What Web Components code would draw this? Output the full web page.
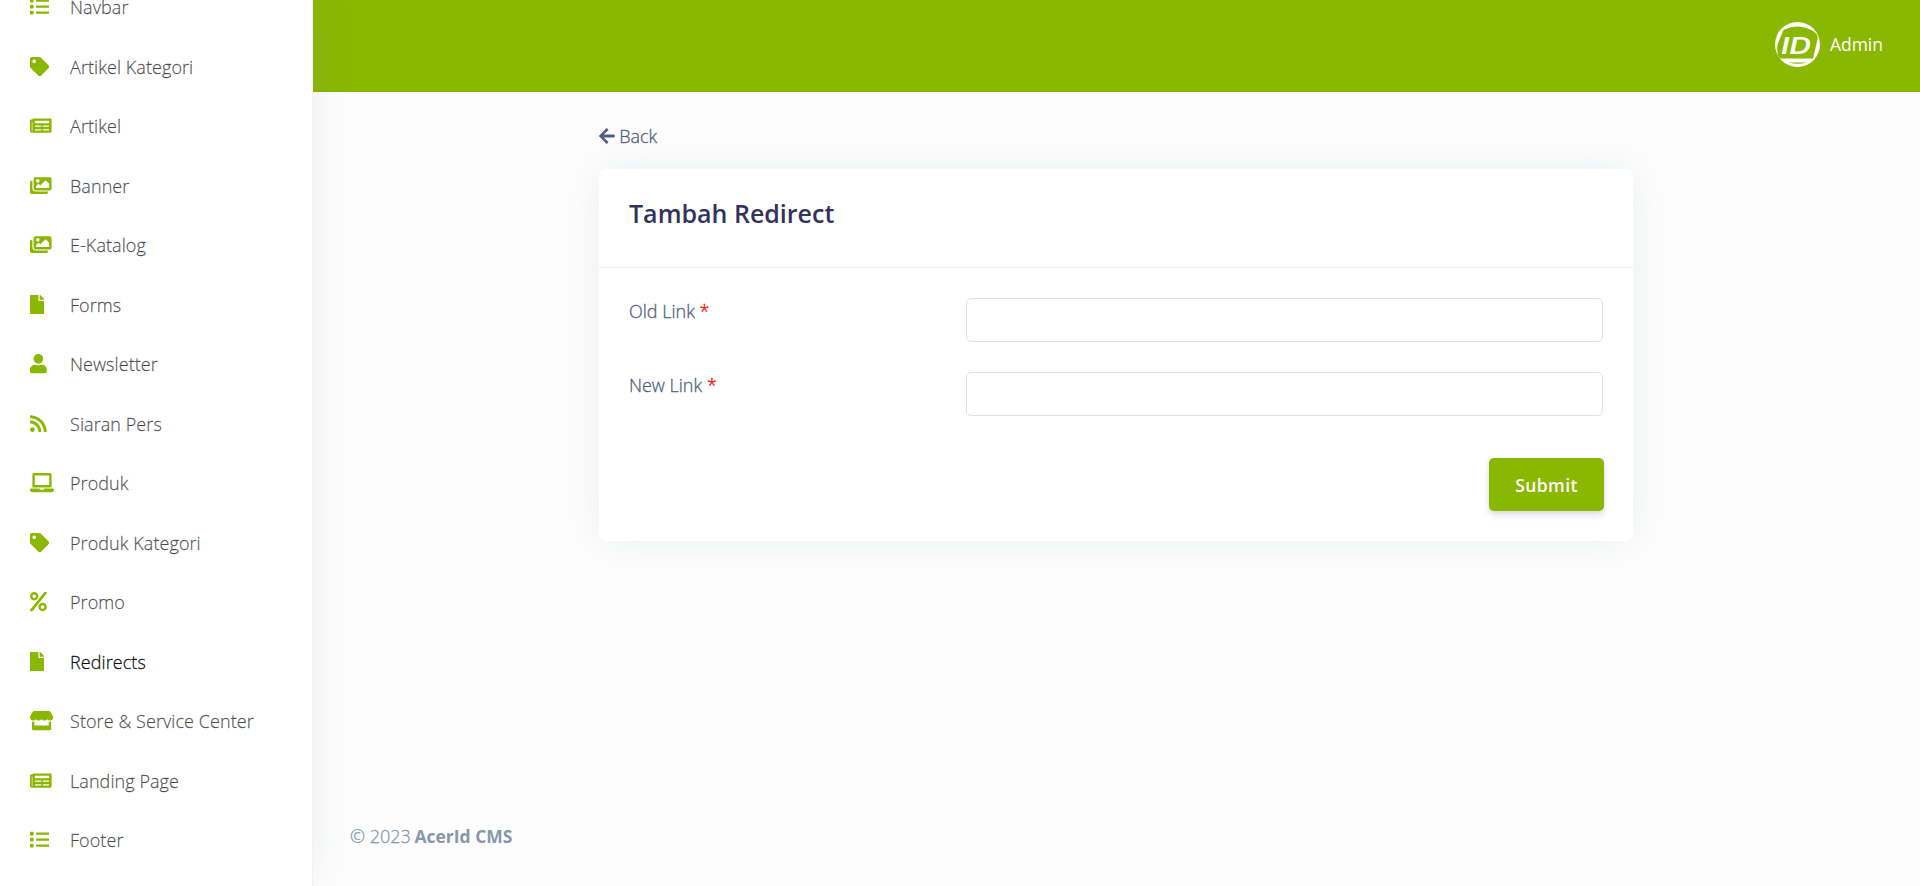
<!DOCTYPE html>
<html lang="id">
<head>
<meta charset="utf-8">
<title>Tambah Redirect</title>
<style>
html,body{margin:0;height:100%;overflow:hidden}
body{background:#fdfdfd;font-family:"Open Sans",sans-serif;font-size:18px;font-weight:300;color:#525f7f;-webkit-text-stroke:.3px currentColor}
</style>
</head>
<body>
<cms-app></cms-app>
<script>
const ICONS = {
list:[512,"M80 368H16a16 16 0 0 0-16 16v64a16 16 0 0 0 16 16h64a16 16 0 0 0 16-16v-64a16 16 0 0 0-16-16zm0-320H16A16 16 0 0 0 0 64v64a16 16 0 0 0 16 16h64a16 16 0 0 0 16-16V64a16 16 0 0 0-16-16zm0 160H16a16 16 0 0 0-16 16v64a16 16 0 0 0 16 16h64a16 16 0 0 0 16-16v-64a16 16 0 0 0-16-16zm416 176H176a16 16 0 0 0-16 16v32a16 16 0 0 0 16 16h320a16 16 0 0 0 16-16v-32a16 16 0 0 0-16-16zm0-320H176a16 16 0 0 0-16 16v32a16 16 0 0 0 16 16h320a16 16 0 0 0 16-16V80a16 16 0 0 0-16-16zm0 160H176a16 16 0 0 0-16 16v32a16 16 0 0 0 16 16h320a16 16 0 0 0 16-16v-32a16 16 0 0 0-16-16z"],
tag:[512,"M0 252.118V48C0 21.49 21.49 0 48 0h204.118a48 48 0 0 1 33.941 14.059l211.882 211.882c18.745 18.745 18.745 49.137 0 67.882L293.823 497.941c-18.745 18.745-49.137 18.745-67.882 0L14.059 286.059A48 48 0 0 1 0 252.118zM112 64c-26.51 0-48 21.49-48 48s21.49 48 48 48 48-21.49 48-48-21.49-48-48-48z"],
news:[576,"M552 64H88c-13.255 0-24 10.745-24 24v8H24c-13.255 0-24 10.745-24 24v272c0 30.928 25.072 56 56 56h472c26.51 0 48-21.49 48-48V88c0-13.255-10.745-24-24-24zM56 400a8 8 0 0 1-8-8V144h16v248a8 8 0 0 1-8 8zm236-16H140c-6.627 0-12-5.373-12-12v-8c0-6.627 5.373-12 12-12h152c6.627 0 12 5.373 12 12v8c0 6.627-5.373 12-12 12zm208 0H348c-6.627 0-12-5.373-12-12v-8c0-6.627 5.373-12 12-12h152c6.627 0 12 5.373 12 12v8c0 6.627-5.373 12-12 12zm-208-96H140c-6.627 0-12-5.373-12-12v-8c0-6.627 5.373-12 12-12h152c6.627 0 12 5.373 12 12v8c0 6.627-5.373 12-12 12zm208 0H348c-6.627 0-12-5.373-12-12v-8c0-6.627 5.373-12 12-12h152c6.627 0 12 5.373 12 12v8c0 6.627-5.373 12-12 12zm0-96H140c-6.627 0-12-5.373-12-12v-40c0-6.627 5.373-12 12-12h360c6.627 0 12 5.373 12 12v40c0 6.627-5.373 12-12 12z"],
images:[576,"M480 416v16c0 26.51-21.49 48-48 48H48c-26.51 0-48-21.49-48-48V176c0-26.51 21.49-48 48-48h16v208c0 44.112 35.888 80 80 80h336zm96-80V80c0-26.51-21.49-48-48-48H144c-26.51 0-48 21.49-48 48v256c0 26.51 21.49 48 48 48h384c26.51 0 48-21.49 48-48zM256 128c0 26.51-21.49 48-48 48s-48-21.49-48-48 21.49-48 48-48 48 21.49 48 48zm-96 144l55.515-55.515c4.686-4.686 12.284-4.686 16.971 0L272 256l135.515-135.515c4.686-4.686 12.284-4.686 16.971 0L512 208v112H160v-48z"],
file:[384,"M224 136V0H24C10.7 0 0 10.7 0 24v464c0 13.3 10.7 24 24 24h336c13.3 0 24-10.7 24-24V160H248c-13.2 0-24-10.8-24-24zm160-14.1v6.1H256V0h6.1c6.4 0 12.5 2.5 17 7l97.9 98c4.5 4.5 7 10.6 7 16.9z"],
user:[448,"M224 256c70.7 0 128-57.3 128-128S294.7 0 224 0 96 57.3 96 128s57.3 128 128 128zm89.6 32h-16.7c-22.2 10.2-46.9 16-72.9 16s-50.6-5.8-72.9-16h-16.7C60.2 288 0 348.2 0 422.4V464c0 26.5 21.5 48 48 48h352c26.5 0 48-21.5 48-48v-41.6c0-74.2-60.2-134.4-134.4-134.4z"],
rss:[448,"M128.081 415.959c0 35.369-28.672 64.041-64.041 64.041S0 451.328 0 415.959s28.672-64.041 64.041-64.041 64.04 28.673 64.04 64.041zm175.66 47.25c-8.354-154.6-132.185-278.587-286.95-286.95C7.656 175.765 0 183.105 0 192.253v48.069c0 8.415 6.49 15.472 14.887 16.018 111.832 7.284 201.473 96.702 208.772 208.772.547 8.397 7.604 14.887 16.018 14.887h48.069c9.149.001 16.489-7.655 15.995-16.79zm144.249.288C439.596 229.677 251.465 40.445 16.503 32.01 7.473 31.686 0 38.981 0 48.016v48.068c0 8.625 6.835 15.645 15.453 15.999 191.179 7.839 344.627 161.316 352.465 352.465.353 8.618 7.373 15.453 15.998 15.453h48.068c9.034-.001 16.329-7.474 16.005-16.504z"],
laptop:[640,"M624 416H381.54c-.74 19.81-14.71 32-32.74 32H288c-18.69 0-33.02-17.47-32.77-32H16c-8.8 0-16 7.2-16 16v16c0 35.2 28.8 64 64 64h512c35.2 0 64-28.8 64-64v-16c0-8.8-7.2-16-16-16zM576 48c0-26.400-21.600-48-48-48H112C85.600 0 64 21.600 64 48v336h512V48zm-64 272H128V64h384v256z"],
percent:[448,"M112 224c61.900 0 112-50.100 112-112S173.900 0 112 0 0 50.100 0 112s50.100 112 112 112zm0-160c26.500 0 48 21.500 48 48s-21.500 48-48 48-48-21.500-48-48 21.500-48 48-48zm224 224c-61.900 0-112 50.100-112 112s50.100 112 112 112 112-50.100 112-112-50.100-112-112-112zm0 160c-26.500 0-48-21.500-48-48s21.500-48 48-48 48 21.500 48 48-21.500 48-48 48zM392.300.2l31.600-.1c19.400-.1 30.900 21.800 19.700 37.800L77.400 501.600a23.950 23.950 0 0 1-19.600 10.200l-33.400.1c-19.500 0-30.900-21.900-19.700-37.800l368-463.700C377.200 4 384.500.2 392.300.2z"],
store:[616,"M602 118.600L537.100 15C531.300 5.700 521 0 510 0H106C95 0 84.700 5.700 78.900 15L14 118.600c-33.500 53.500-3.800 127.900 58.800 136.400 4.500.6 9.100.9 13.700.9 29.600 0 55.800-13 73.800-33.100 18 20.100 44.300 33.100 73.800 33.100 29.600 0 55.800-13 73.800-33.100 18 20.100 44.300 33.100 73.800 33.100 29.600 0 55.800-13 73.800-33.100 18.100 20.100 44.300 33.100 73.800 33.100 4.700 0 9.200-.3 13.700-.9 62.800-8.400 92.600-82.800 59-136.400zM529.500 288c-10 0-19.900-1.500-29.500-3.800V384H116v-99.800c-9.600 2.200-19.500 3.800-29.500 3.800-6 0-12.100-.4-18-1.200-5.600-.8-11.100-2.100-16.400-3.600V480c0 17.700 14.300 32 32 32h448c17.700 0 32-14.300 32-32V283.200c-5.400 1.600-10.800 2.900-16.400 3.600-6.100.8-12.100 1.200-18.200 1.200z"],
back:[448,"M257.500 445.100l-22.200 22.200c-9.400 9.400-24.600 9.400-33.900 0L7 273c-9.400-9.400-9.400-24.600 0-33.900L201.400 44.700c9.400-9.400 24.600-9.400 33.900 0l22.200 22.200c9.500 9.500 9.300 25-.4 34.300L136.600 216H424c13.300 0 24 10.700 24 24v32c0 13.300-10.700 24-24 24H136.600l120.500 114.800c9.800 9.300 10 24.800.4 34.300z"]
};
const define = (name, html) => customElements.define(name, class extends HTMLElement {
  constructor(){
    super();
    this.attachShadow({mode:"open"}).innerHTML = typeof html === "function" ? "" : html;
  }
  connectedCallback(){ if (typeof html === "function") this.shadowRoot.innerHTML = html(this); }
});

define("cms-icon", el => {
  const [w, d] = ICONS[el.getAttribute("name")];
  return `<style>:host{display:block;flex:none;height:var(--icon-size,19.2px)}svg{display:block;height:100%;fill:currentColor}</style>
  <svg viewBox="0 0 ${w} 512" style="aspect-ratio:${w}/512"><path d="${d}"/></svg>`;
});

define("nav-item", el => `<style>
:host{display:flex;align-items:center;height:59.5px;padding-left:30px;color:rgba(0,0,0,.6);letter-spacing:.07px}
:host([active]){color:rgba(0,0,0,.9)}
.i{width:40px;color:#8ab700}
a{white-space:nowrap}
</style><div class="i"><cms-icon name="${el.getAttribute("icon")}"></cms-icon></div><a><slot></slot></a>`);

define("side-nav", `<style>
:host{display:block;position:relative;z-index:2;flex:none;box-sizing:border-box;width:313px;height:886px;background:#fff;border-right:1px solid #f1f2f4;box-shadow:0 0 40px rgba(136,152,170,.15)}
nav{margin-top:-22.7px}
</style><nav><slot></slot></nav>`);

define("user-badge", `<style>
:host{display:flex;align-items:center;gap:10px;color:#fff;font-size:17.5px;font-weight:400;-webkit-text-stroke:0}
svg{display:block;width:45px;height:45px}
</style>
<svg viewBox="0 0 45 45"><defs><clipPath id="c"><circle cx="22.5" cy="22.5" r="22.5"/></clipPath></defs>
<g clip-path="url(#c)"><rect width="45" height="45" fill="#fff"/>
<path d="M8.500 8Q22.500 1 37 8.500Q43.500 12 42.600 17L38 36.500H3.600Q1.500 30 2.600 22Z" fill="#8ab700"/>
<path d="M13.500 40.500H32Q22.500 43 13.500 40.500Z" fill="#8ab700"/>
<text x="6" y="32" textLength="30" lengthAdjust="spacingAndGlyphs" font-family="Inter,sans-serif" font-weight="600" font-style="italic" font-size="23" fill="#fff">ID</text></g></svg>
<span><slot></slot></span>`);

define("top-bar", `<style>
:host{display:flex;justify-content:flex-end;align-items:center;box-sizing:border-box;height:92px;padding:0 37px 3px 0;background:#8ab700;border-bottom:1px solid #84b000}
</style><slot></slot>`);

define("back-link", `<style>
:host{display:flex;align-items:center;gap:4.500px;height:27px;--icon-size:18px}
</style><cms-icon name="back"></cms-icon><a><slot></slot></a>`);

define("form-card", `<style>
:host{display:block;box-sizing:border-box;width:1034px;height:372px;background:#fff;border-radius:7px;box-shadow:0 0 40px rgba(136,152,170,.15)}
header{box-sizing:border-box;height:99px;padding:25px 30px;border-bottom:1px solid #edf0f3}
h3{margin:0;font-size:25px;line-height:38px;font-weight:600;color:#32325d;-webkit-text-stroke:0}
.body{padding:30px 30px 0;display:flex;flex-direction:column}
</style><header><h3><slot name="title"></slot></h3></header><div class="body"><slot></slot></div>`);

define("form-row", `<style>
:host{display:flex;justify-content:space-between;align-items:flex-start;height:74px}
label{line-height:27px;white-space:pre}
b{font-weight:300;color:#f00}
input{box-sizing:border-box;width:637px;height:44px;margin:0;border:1px solid #dee2e6;border-radius:5px;background:#fff;outline:0}
</style><label><slot></slot> <b>*</b></label><input type="text">`);

define("submit-button", `<style>
:host{display:flex;justify-content:flex-end;margin:12px -1px 0 0;-webkit-text-stroke:0}
button{width:115px;height:53px;border:0;padding:0;border-radius:5px;background:#8ab700;color:#fff;font:600 17.5px "Open Sans",sans-serif;letter-spacing:.4px;box-shadow:0 5px 7px rgba(50,50,93,.11),0 1px 4px rgba(0,0,0,.08)}
</style><button><slot></slot></button>`);

define("page-footer", `<style>
:host{display:block;margin:auto 0 36px 37px;line-height:27px;color:#8898aa}
</style><slot></slot>`);

define("cms-app", `<style>
:host{display:flex;height:886px}
main{flex:1;display:flex;flex-direction:column}
.content{width:1034px;margin:30px 0 0 286px}
form-card{margin-top:20px}
strong{font-weight:700;font-size:17.5px;margin-left:-1px;-webkit-text-stroke:0}
</style>
<side-nav>
<nav-item icon="list">Navbar</nav-item><nav-item icon="tag">Artikel Kategori</nav-item><nav-item icon="news">Artikel</nav-item><nav-item icon="images">Banner</nav-item><nav-item icon="images">E-Katalog</nav-item><nav-item icon="file">Forms</nav-item><nav-item icon="user">Newsletter</nav-item><nav-item icon="rss">Siaran Pers</nav-item><nav-item icon="laptop">Produk</nav-item><nav-item icon="tag">Produk Kategori</nav-item><nav-item icon="percent">Promo</nav-item><nav-item icon="file" active>Redirects</nav-item><nav-item icon="store">Store &amp; Service Center</nav-item><nav-item icon="news">Landing Page</nav-item><nav-item icon="list">Footer</nav-item>
</side-nav>
<main>
<top-bar><user-badge>Admin</user-badge></top-bar>
<div class="content">
<back-link>Back</back-link>
<form-card><span slot="title">Tambah Redirect</span>
<form-row>Old Link</form-row><form-row>New Link</form-row><submit-button>Submit</submit-button></form-card>
</div>
<page-footer>© 2023 <strong>AcerId CMS</strong></page-footer>
</main>`);
</script>
</body>
</html>
